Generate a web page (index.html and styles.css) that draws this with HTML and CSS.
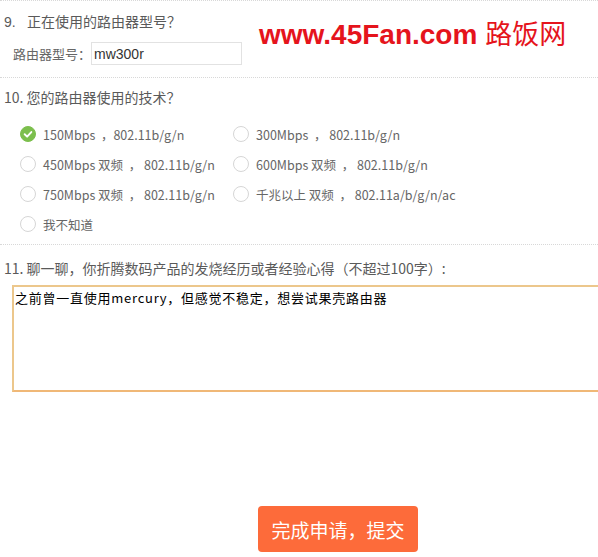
FILE: index.html
```html
<!DOCTYPE html>
<html lang="zh-CN">
<head>
    <meta charset="UTF-8">
    <meta name="viewport" content="width=device-width, initial-scale=1.0">
    <title>问卷</title>
    <link rel="stylesheet" href="styles.css">
</head>
<body>
    <div class="survey">
        <div class="section section-9">
            <p class="question"><span class="num">9.</span>正在使用的路由器型号？</p>
            <div class="field">
                <label for="model" class="label">路由器型号：</label>
                <input type="text" id="model" class="input" value="mw300r">
            </div>
        </div>

        <div class="section section-10">
            <p class="question"><span class="num-tight">10.</span>您的路由器使用的技术？</p>
            <div class="options">
                <div class="option checked"><span class="radio"><svg viewBox="0 0 16 16"><path d="M4.2 8.3 7 11l4.8-5.2"></path></svg></span>150Mbps &nbsp;，802.11b/g/n</div>
                <div class="option"><span class="radio"></span>300Mbps &nbsp;， 802.11b/g/n</div>
                <div class="option"><span class="radio"></span>450Mbps 双频 &nbsp;， 802.11b/g/n</div>
                <div class="option"><span class="radio"></span>600Mbps 双频 &nbsp;， 802.11b/g/n</div>
                <div class="option"><span class="radio"></span>750Mbps 双频 &nbsp;， 802.11b/g/n</div>
                <div class="option"><span class="radio"></span>千兆以上 双频 &nbsp;， 802.11a/b/g/n/ac</div>
                <div class="option"><span class="radio"></span>我不知道</div>
            </div>
        </div>

        <div class="section section-11">
            <p class="question"><span class="num-tight">11.</span>聊一聊，你折腾数码产品的发烧经历或者经验心得（不超过100字）:</p>
            <textarea class="textarea">之前曾一直使用mercury，但感觉不稳定，想尝试果壳路由器</textarea>
        </div>

        <div class="actions">
            <button class="submit">完成申请，提交</button>
        </div>
    </div>

    <div class="watermark">www.45Fan.com <span class="watermark-cn">路饭网</span></div>
</body>
</html>
```

FILE: styles.css
```css
* {
    margin: 0;
    padding: 0;
    box-sizing: border-box;
}

body {
    font-family: "Noto Sans CJK SC", "Liberation Sans", sans-serif;
    background: white;
    color: #555;
    width: 598px;
    overflow: hidden;
}

.survey {
    width: 598px;
}

.section {
    border-top: 1px dotted #d8d8d8;
}

.section-9 {
    padding: 9px 0 12px;
}

.section-10 {
    padding: 8px 0 5px;
}

.section-11 {
    padding: 12px 0 0;
}

.question {
    font-size: 14px;
    line-height: 22px;
    color: #5a5a5a;
    padding-left: 4px;
    white-space: nowrap;
}

.num {
    display: inline-block;
    width: 23px;
    font-family: "Liberation Sans", sans-serif;
}

.num-tight {
    margin-right: 3px;
}

.field {
    display: flex;
    align-items: center;
    margin-top: 9px;
    padding-left: 13px;
}

.label {
    font-size: 13px;
    color: #666;
    width: 78px;
}

.input {
    width: 151px;
    height: 23px;
    border: 1px solid #e2e2e2;
    padding: 0 2px;
    font-family: "Liberation Sans", sans-serif;
    font-size: 14px;
    color: #333;
    outline: none;
}

.options {
    display: grid;
    grid-template-columns: 213px 240px;
    grid-auto-rows: 30px;
    margin-top: 11px;
    padding-left: 20px;
}

.option {
    display: flex;
    align-items: center;
    gap: 7px;
    font-size: 12.5px;
    color: #666;
    white-space: nowrap;
}

.radio {
    width: 16px;
    height: 16px;
    border: 1px solid #d6d6d6;
    border-radius: 50%;
    flex: none;
    display: flex;
    align-items: center;
    justify-content: center;
}

.option.checked .radio {
    background: #7cbf4d;
    border-color: #7cbf4d;
}

.radio svg {
    width: 14px;
    height: 14px;
    fill: none;
    stroke: white;
    stroke-width: 2.2;
    stroke-linecap: round;
    stroke-linejoin: round;
}

.textarea {
    display: block;
    width: 600px;
    height: 107px;
    margin: 6px 0 0 12px;
    border: 2px solid #ecc78c;
    border-bottom-color: #f0b877;
    padding: 3px 1px;
    font-family: "Noto Sans CJK SC", sans-serif;
    font-size: 13px;
    letter-spacing: 0.75px;
    line-height: 16px;
    color: #000;
    resize: none;
    outline: none;
}

.actions {
    padding: 114px 0 0 258px;
}

.submit {
    width: 160px;
    height: 46px;
    background: #fd6b3a;
    color: #fff;
    border: none;
    border-radius: 4px;
    font-family: "Noto Sans CJK SC", sans-serif;
    font-size: 19px;
    cursor: pointer;
}

.watermark {
    position: absolute;
    left: 259px;
    top: 13px;
    color: #e5141c;
    font-family: "Liberation Sans", Arial, sans-serif;
    font-weight: bold;
    font-size: 28px;
    white-space: nowrap;
}

.watermark-cn {
    font-family: "Noto Sans CJK SC", sans-serif;
    font-weight: normal;
    font-size: 27px;
}
```
